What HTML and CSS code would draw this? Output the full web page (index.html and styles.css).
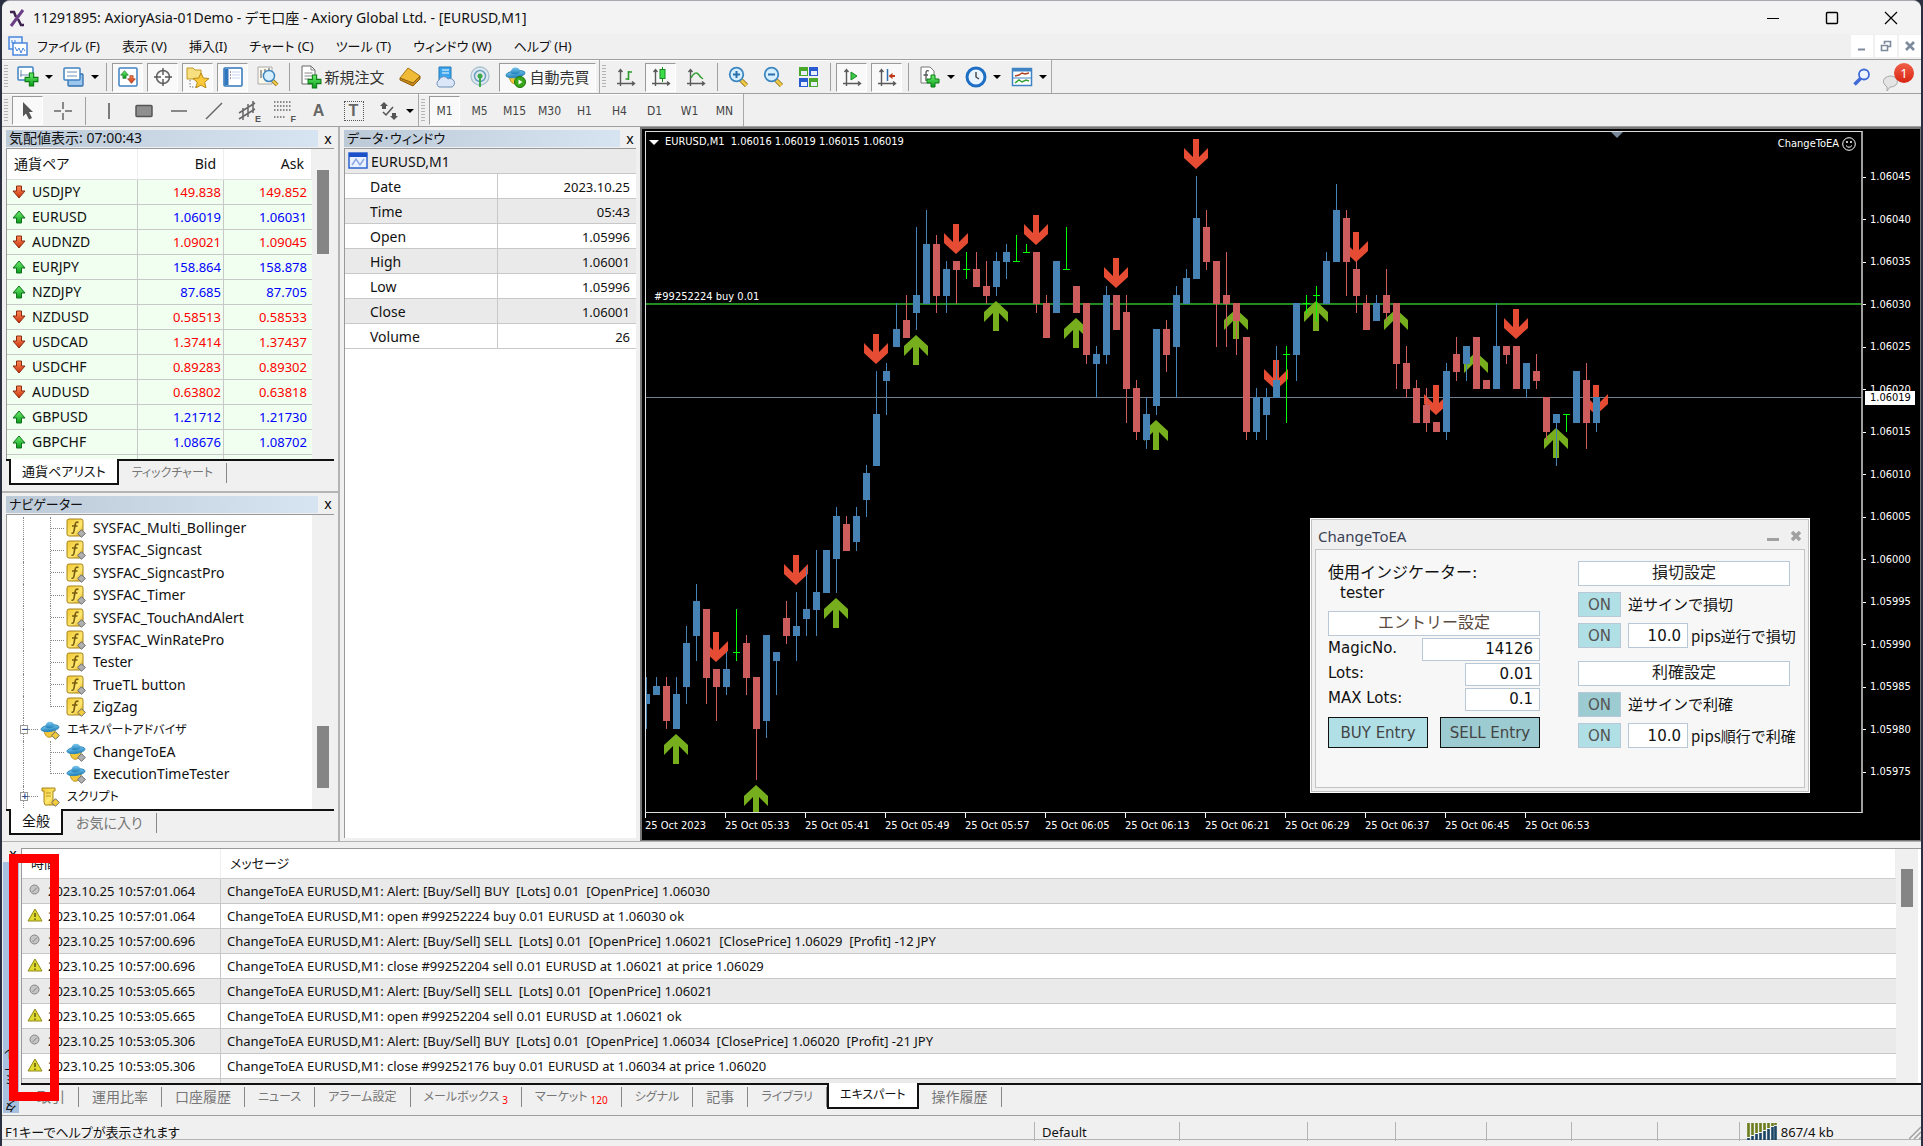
FILE: index.html
```html
<!DOCTYPE html>
<html lang="ja">
<head>
<meta charset="utf-8">
<title>11291895: AxioryAsia-01Demo - デモ口座</title>
<link rel="stylesheet" href="styles.css">
</head>
<body>
<svg class="defs" aria-hidden="true">
  <defs>
    <linearGradient id="gGreen" x1="0" y1="0" x2="0" y2="1"><stop offset="0" stop-color="#6df06d"/><stop offset="1" stop-color="#0a9a1c"/></linearGradient>
    <linearGradient id="gRed" x1="0" y1="0" x2="0" y2="1"><stop offset="0" stop-color="#ff8a55"/><stop offset="1" stop-color="#c8320e"/></linearGradient>
    <linearGradient id="gGold" x1="0" y1="0" x2="1" y2="1"><stop offset="0" stop-color="#f0c832"/><stop offset=".6" stop-color="#ffe870"/><stop offset="1" stop-color="#dca818"/></linearGradient>
    <linearGradient id="gBlue" x1="0" y1="0" x2="0" y2="1"><stop offset="0" stop-color="#7cc8f0"/><stop offset="1" stop-color="#1f7fb8"/></linearGradient>
  </defs>
  <symbol id="down" viewBox="0 0 14 14"><path d="M4.500 1h5v5h3.500L7 13 1 6h3.500z" fill="url(#gRed)" stroke="#8c2a10"/></symbol>
  <symbol id="up" viewBox="0 0 14 14"><path d="M4.500 13h5V8H13L7 1 1 8h3.500z" fill="url(#gGreen)" stroke="#11701c"/></symbol>
  <symbol id="func" viewBox="0 0 20 20"><rect x="1" y="1" width="16" height="17" rx="2" fill="url(#gGold)" stroke="#a8841a"/><path d="M12.500 4.500c-2-1-3 0-3.300 2L8 13c-.3 2-1 2.500-2.500 2M6 8h5.500" fill="none" stroke="#7a5c10" stroke-width="1.600"/></symbol>
  <symbol id="dia" viewBox="0 0 9 9"><path d="M4.500.7 8.300 4.500 4.500 8.300.7 4.500z" fill="currentColor" stroke="#6b6b6b"/></symbol>
  <symbol id="hat" viewBox="0 0 22 20"><path d="M4 9h13l-1 4c-1 3-3 5-6 5s-5-3-6-9z" fill="#f2c83a" stroke="#b58a18"/><ellipse cx="11" cy="8" rx="10" ry="3.600" transform="rotate(-8 11 8)" fill="url(#gBlue)" stroke="#2f88b8"/><path d="M6 7c0-4 2-6 5-6s5 2 5 5c-2 2-7 3-10 1z" fill="url(#gBlue)"/></symbol>
  <symbol id="plus" viewBox="0 0 14 14"><path d="M5 1h4v4h4v4H9v4H5V9H1V5h4z" fill="url(#gGreen)" stroke="#0b7a14"/></symbol>
  <symbol id="dot" viewBox="0 0 16 14"><circle cx="7.500" cy="6.500" r="4.500" fill="#c4c4c4" stroke="#858585"/><path d="M5.500 9 10 4.500" stroke="#858585"/></symbol>
  <symbol id="warn" viewBox="0 0 16 14"><path d="M8 1 15 13H1z" fill="#e0da30" stroke="#8f8a1c"/><path d="M8 5v4M8 10.500V12" stroke="#5a5710" stroke-width="1.500"/></symbol>
  <symbol id="axes" viewBox="0 0 20 20"><path d="M4.500 19V3M1 16.500h17M2.500 5l2-2.500 2 2.500M16 14.500l2.500 2-2.500 2" fill="none" stroke="#5a5a5a" stroke-width="1.400"/></symbol>
  <symbol id="lens" viewBox="0 0 22 22"><path d="m13 14 5.500 5.500" stroke="#8c6a10" stroke-width="4.500"/><path d="m13 14 5.500 5.500" stroke="#f0cc4a" stroke-width="2.800"/><circle cx="8.500" cy="8.500" r="6.800" fill="#d6efff" stroke="#3c86c0" stroke-width="1.800"/></symbol>
</svg>

<div class="app">
  <header class="titlebar">
    <svg class="logo" width="16" height="18" viewBox="0 0 16 18"><path d="M1 3h4l2 5M9 10l3 6h3" fill="none" stroke="#3d2350" stroke-width="2.500"/><path d="M14 1 2 17" stroke="#6a3f86" stroke-width="3"/></svg>
    <h1>11291895: AxioryAsia-01Demo - デモ口座 - Axiory Global Ltd. - [EURUSD,M1]</h1>
    <div class="winctl">
      <button aria-label="最小化"><svg width="14" height="14"><path d="M1 7.500h12" stroke="#000" fill="none"/></svg></button>
      <button aria-label="最大化"><svg width="14" height="14"><rect x="1.500" y="1.500" width="11" height="11" rx="1" stroke="#000" stroke-width="1.400" fill="none"/></svg></button>
      <button aria-label="閉じる"><svg width="14" height="14"><path d="m1 1 12 12M13 1 1 13" stroke="#000" stroke-width="1.200"/></svg></button>
    </div>
  </header>

  <nav class="menubar">
    <svg width="20" height="20" viewBox="0 0 20 20"><rect x="1" y="1" width="13" height="12" fill="#eaf3ff" stroke="#4a86dc" stroke-width="1.500"/><rect x="5" y="7" width="14" height="12" fill="#fff" stroke="#4a86dc" stroke-width="1.500"/><path d="M7 11l2 4 2-3 2 5 2-5 2 3M4 4v3h3V4" fill="none" stroke="#4a86dc"/></svg>
    <button>ファイル (F)</button><button>表示 (V)</button><button>挿入(I)</button><button>チャート (C)</button><button>ツール (T)</button><button>ウィンドウ (W)</button><button>ヘルプ (H)</button>
    <div class="mdictl">
      <button aria-label="最小化"><svg width="12" height="12"><path d="M2 9.500h7" stroke="#7c8a9c" stroke-width="2"/></svg></button>
      <button aria-label="元に戻す"><svg width="12" height="12"><path d="M4.500 4V1.500h6v5H8M1.500 5.500h6v5h-6z" fill="none" stroke="#7c8a9c" stroke-width="1.600"/></svg></button>
      <button aria-label="閉じる"><svg width="12" height="12"><path d="m2 2 8 8M10 2l-8 8" stroke="#7c8a9c" stroke-width="2.600"/></svg></button>
    </div>
  </nav>

  <div class="toolrow">
    <div class="tools">
      <i class="grip"></i>
      <button class="tb drop" aria-label="新規チャート"><svg width="22" height="22" viewBox="0 0 22 22"><rect x="1" y="1" width="15" height="13" rx="1" fill="#fff" stroke="#3f83c4" stroke-width="1.500"/><path d="M4 4v7M3 9h9" stroke="#6a8fb4"/><use href="#plus" x="7" y="6" width="15" height="15"/></svg></button>
      <button class="tb drop" aria-label="表示設定"><svg width="22" height="22" viewBox="0 0 22 22"><rect x="5" y="8" width="15" height="12" rx="1" fill="#9cc6ec" stroke="#2f6fae" stroke-width="1.300"/><rect x="1" y="2" width="16" height="12" rx="1" fill="#fff" stroke="#3f83c4" stroke-width="1.500"/><path d="M4 6h10M4 10h10" stroke="#6a8fb4"/></svg></button>
      <i class="sep"></i>
      <button class="tb on" aria-label="気配値表示"><svg width="20" height="20" viewBox="0 0 20 20"><rect x="1" y="1" width="18" height="18" rx="1" fill="#fff" stroke="#3f83c4" stroke-width="1.500"/><use href="#up" x="2" y="3" width="9" height="9"/><use href="#down" x="9" y="8" width="9" height="9"/></svg></button>
      <button class="tb on" aria-label="データウィンドウ"><svg width="20" height="20" viewBox="0 0 20 20"><circle cx="10" cy="10" r="6.500" fill="none" stroke="#666" stroke-width="1.600"/><path d="M10 1v7M10 12v7M1 10h7M12 10h7" stroke="#555" stroke-width="1.400"/></svg></button>
      <button class="tb on" aria-label="ナビゲーター"><svg width="24" height="22" viewBox="0 0 24 22"><path d="M1 2h6l2 2h6v9H1z" fill="#f8e080" stroke="#c09a28"/><path d="M4 14v7h6" fill="none" stroke="#777" stroke-dasharray="1.500 1.500"/><path d="m15 7 2.300 5 5.700.5-4.300 3.800L20 22l-5-3-5 3 1.300-5.700L7 12.500l5.700-.5z" fill="#f9c93a" stroke="#b98a14"/></svg></button>
      <button class="tb on" aria-label="ターミナル"><svg width="20" height="20" viewBox="0 0 20 20"><rect x="1" y="1" width="18" height="18" rx="1" fill="#fff" stroke="#2f76bc" stroke-width="1.500"/><path d="M3.500 2v16" stroke="#2f76bc" stroke-width="4"/><path d="M9 5h8M9 8h8M9 11h8" stroke="#c9d6f0"/><path d="M7 5h1M7 8h1M7 11h1" stroke="#334"/></svg></button>
      <button class="tb" aria-label="ストラテジーテスター"><svg width="24" height="22" viewBox="0 0 24 22"><path d="M2 1h14v17H2z" fill="#fbf8ec" stroke="#aaa"/><path d="M5 4v8M9 3v10M13 2v10" stroke="#888" stroke-width="1.500"/><use href="#lens" x="6" y="3" width="18" height="18"/></svg></button>
      <i class="sep"></i>
      <button class="tb text"><svg width="22" height="24" viewBox="0 0 22 24"><path d="M2 1h9l4 4v14H2z" fill="#fff" stroke="#666"/><path d="M11 1v4h4M4.500 8h8M4.500 11h8M4.500 14h5" fill="none" stroke="#888"/><use href="#plus" x="7" y="9" width="15" height="15"/></svg>新規注文</button>
      <button class="tb" aria-label="MetaEditor"><svg width="22" height="20" viewBox="0 0 22 20"><path d="m9 1 12 8-7 9L1 11z" fill="#f0bc38" stroke="#a87410"/><path d="m1 11 13 5 7-7v3l-7 7L1 13z" fill="#c88a18" stroke="#8f6010"/></svg></button>
      <button class="tb" aria-label="VPS"><svg width="22" height="22" viewBox="0 0 22 22"><path d="M5 1h12v13H5z" fill="#3aa4ec" stroke="#2278b8"/><path d="M8 4h7M8 7h7" stroke="#fff"/><path d="M5 21a4 4 0 0 1 0-7 5 5 0 0 1 9-1 4 4 0 0 1 4 8z" fill="#dbe7f8" stroke="#6f90b8"/></svg></button>
      <button class="tb" aria-label="シグナル"><svg width="22" height="22" viewBox="0 0 22 22"><circle cx="11" cy="10" r="9" fill="#dfe9ef" stroke="#a8c0d0" stroke-width="1.300"/><circle cx="11" cy="10" r="5.500" fill="none" stroke="#6ba0c4" stroke-width="1.500"/><circle cx="11" cy="10" r="2.500" fill="#3aa84a"/><path d="M11 11v10" stroke="#3aa84a" stroke-width="2"/></svg></button>
      <button class="tb text on auto"><svg width="22" height="24" viewBox="0 0 22 22"><use href="#hat" width="21" height="20"/><circle cx="15" cy="16" r="5.500" fill="#38a818" stroke="#1f7408"/><path d="m13.500 13.500 4 2.500-4 2.500z" fill="#fff"/></svg>自動売買</button>
    </div>
    <div class="tools">
      <i class="grip"></i>
      <button class="tb" aria-label="バーチャート"><svg width="20" height="20"><use href="#axes"/><path d="M12.500 4v9M12.500 5H16M9.500 12h3" stroke="#2a9a2a" stroke-width="1.600" fill="none"/></svg></button>
      <button class="tb on" aria-label="ローソク足"><svg width="20" height="20"><use href="#axes"/><path d="M11.500 0v15" stroke="#1a8a1a"/><rect x="9" y="2.500" width="5" height="9" fill="#3ddc4a" stroke="#128a1c"/></svg></button>
      <button class="tb" aria-label="ラインチャート"><svg width="20" height="20"><use href="#axes"/><path d="M5 11C8 5 11 5 13 8s3 3 4 4" stroke="#35a035" stroke-width="1.500" fill="none"/></svg></button>
      <i class="sep"></i>
      <button class="tb" aria-label="拡大"><svg width="22" height="22"><use href="#lens"/><path d="M5 8.500h7M8.500 5v7" stroke="#2a6eaa" stroke-width="2"/></svg></button>
      <button class="tb" aria-label="縮小"><svg width="22" height="22"><use href="#lens"/><path d="M5 8.500h7" stroke="#2a6eaa" stroke-width="2"/></svg></button>
      <button class="tb" aria-label="整列"><svg width="22" height="22"><path d="M1 1h9v9H1zM11 12h9v9h-9z" fill="#4aa82a"/><path d="M11 1h9v9h-9zM1 12h9v9H1z" fill="#2a5ad0"/><path d="M3 5h6v4H3zM13 5h6v4h-6zM3 16h6v4H3zM13 16h6v4h-6z" fill="#e8f0ff"/></svg></button>
      <i class="sep"></i>
      <button class="tb on" aria-label="自動スクロール"><svg width="20" height="20"><use href="#axes"/><path d="m9 5 6 4-6 4z" fill="#3cc84a" stroke="#158a20"/></svg></button>
      <button class="tb on" aria-label="チャートシフト"><svg width="20" height="20"><use href="#axes"/><path d="M10.500 2v12" stroke="#2f6fae" stroke-width="1.500"/><path d="m11.500 9 4-3v2H18v2h-2.500v2z" fill="#c03a1a"/></svg></button>
      <i class="sep"></i>
      <button class="tb drop" aria-label="インディケータ"><svg width="22" height="22"><path d="M2 1h9l4 4v12H2z" fill="#fff" stroke="#777"/><path d="M10 5c-2-1-3 0-3 2v8M4.500 9H9" fill="none" stroke="#555" stroke-width="1.300"/><use href="#plus" x="7" y="8" width="14" height="14"/></svg></button>
      <button class="tb drop" aria-label="時間足"><svg width="22" height="22"><circle cx="11" cy="11" r="9" fill="#e8f4ff" stroke="#1d6fc4" stroke-width="3"/><path d="M11 6v5l3 2" fill="none" stroke="#444" stroke-width="1.400"/></svg></button>
      <button class="tb drop" aria-label="定型チャート"><svg width="22" height="22"><rect x="1.500" y="2.500" width="19" height="17" fill="#fff" stroke="#3f83c4" stroke-width="1.500"/><path d="M2 4h18" stroke="#3f83c4" stroke-width="3"/><path d="m4 10 4-1 3-2 3 1 4-1" fill="none" stroke="#b04020" stroke-width="1.500"/><path d="m4 17 4-3 3 2 4-2 3 1" fill="none" stroke="#35a035" stroke-width="1.500"/><path d="M2 12h18" stroke="#3f83c4"/></svg></button>
    </div>
    <div class="notify">
      <button class="bare" aria-label="検索"><svg width="18" height="18"><circle cx="11" cy="6.500" r="5" fill="#eef4ff" stroke="#3f6ad8" stroke-width="1.800"/><path d="m7.500 10.500-6 6" stroke="#3f6ad8" stroke-width="3.500"/></svg></button>
      <button class="bare chat" aria-label="通知"><svg width="20" height="20"><path d="M3 13a7 5.500 0 1 1 5 2l-3 4v-4z" fill="#e4e4e4" stroke="#a8a8a8"/></svg><b class="badge">1</b></button>
    </div>
  </div>

  <div class="toolrow second">
    <div class="tools">
      <i class="grip"></i>
      <button class="tb on" aria-label="カーソル"><svg width="14" height="20"><path d="m2 1 10 10H8l3 6-3 1.500-3-6-3 3z" fill="#555"/></svg></button>
      <button class="tb" aria-label="クロスヘア"><svg width="20" height="20"><path d="M10 1v7M10 12v7M1 10h7M12 10h7" stroke="#666" stroke-width="1.500"/></svg></button>
      <i class="sep"></i>
      <button class="tb" aria-label="垂直線"><svg width="20" height="20"><path d="M10 2v16" stroke="#555" stroke-width="1.500"/></svg></button>
      <button class="tb" aria-label="長方形"><svg width="20" height="20"><rect x="2" y="4.500" width="16" height="11" rx="1" fill="#8f8f8f" stroke="#555" stroke-width="1.500"/></svg></button>
      <button class="tb" aria-label="水平線"><svg width="20" height="20"><path d="M2 10h16" stroke="#666" stroke-width="1.500"/></svg></button>
      <button class="tb" aria-label="トレンドライン"><svg width="20" height="20"><path d="M2 18 18 2" stroke="#666" stroke-width="1.500"/></svg></button>
      <button class="tb sub" aria-label="等間隔チャネル"><svg width="22" height="22"><path d="M1 13 17 3M1 19 17 9M5 20V8M10 17V4M15 13V1" stroke="#666" stroke-width="1.500"/></svg><small>E</small></button>
      <button class="tb sub" aria-label="フィボナッチ"><svg width="22" height="22"><path d="M1 2h18M1 6h18M1 10h18M1 17h11" stroke="#666" stroke-width="1.500" stroke-dasharray="1.500 1.500"/></svg><small>F</small></button>
      <button class="tb glyph">A</button>
      <button class="tb glyph frame">T</button>
      <button class="tb drop" aria-label="矢印"><svg width="22" height="22"><path d="m6 2 4 4H8v3H4V6H2zM16 20l-4-4h2v-3h4v3h2z" fill="#555"/><path d="m5 12 3 3 7-8" fill="none" stroke="#555" stroke-width="1.500"/></svg></button>
    </div>
    <div class="tools">
      <i class="grip"></i>
      <button class="tb tf on">M1</button><button class="tb tf">M5</button><button class="tb tf">M15</button><button class="tb tf">M30</button><button class="tb tf">H1</button><button class="tb tf">H4</button><button class="tb tf">D1</button><button class="tb tf">W1</button><button class="tb tf">MN</button>
    </div>
  </div>

  <main class="work">
    <div class="dock">
      <section class="panel market">
        <div class="cap"><h2>気配値表示: 07:00:43</h2><button class="x" aria-label="閉じる">x</button></div>
        <div class="well scrolled">
          <table class="quotes">
            <thead><tr><th>通貨ペア</th><th>Bid</th><th>Ask</th></tr></thead>
            <tbody>
              <tr class="dn"><td><svg><use href="#down"/></svg>USDJPY</td><td>149.838</td><td>149.852</td></tr>
              <tr class="up"><td><svg><use href="#up"/></svg>EURUSD</td><td>1.06019</td><td>1.06031</td></tr>
              <tr class="dn"><td><svg><use href="#down"/></svg>AUDNZD</td><td>1.09021</td><td>1.09045</td></tr>
              <tr class="up"><td><svg><use href="#up"/></svg>EURJPY</td><td>158.864</td><td>158.878</td></tr>
              <tr class="up"><td><svg><use href="#up"/></svg>NZDJPY</td><td>87.685</td><td>87.705</td></tr>
              <tr class="dn"><td><svg><use href="#down"/></svg>NZDUSD</td><td>0.58513</td><td>0.58533</td></tr>
              <tr class="dn"><td><svg><use href="#down"/></svg>USDCAD</td><td>1.37414</td><td>1.37437</td></tr>
              <tr class="dn"><td><svg><use href="#down"/></svg>USDCHF</td><td>0.89283</td><td>0.89302</td></tr>
              <tr class="dn"><td><svg><use href="#down"/></svg>AUDUSD</td><td>0.63802</td><td>0.63818</td></tr>
              <tr class="up"><td><svg><use href="#up"/></svg>GBPUSD</td><td>1.21712</td><td>1.21730</td></tr>
              <tr class="up"><td><svg><use href="#up"/></svg>GBPCHF</td><td>1.08676</td><td>1.08702</td></tr>
              <tr><td></td><td></td><td></td></tr>
            </tbody>
          </table>
          <div class="bar"><i class="thumb top"></i></div>
        </div>
        <div class="tabs"><button class="tab cur">通貨ペアリスト</button><button class="tab kana">ティックチャート</button></div>
      </section>
      <section class="panel navi">
        <div class="cap"><h2>ナビゲーター</h2><button class="x" aria-label="閉じる">x</button></div>
        <div class="well scrolled">
          <ul class="tree">
            <li><i class="rail"></i><i class="branch"></i><svg class="ic"><use href="#func"/><use class="gem" href="#dia" x="11" y="11" width="9" height="9"/></svg>SYSFAC_Multi_Bollinger</li>
            <li><i class="rail"></i><i class="branch"></i><svg class="ic"><use href="#func"/><use class="gem" href="#dia" x="11" y="11" width="9" height="9"/></svg>SYSFAC_Signcast</li>
            <li><i class="rail"></i><i class="branch"></i><svg class="ic"><use href="#func"/><use class="gem" href="#dia" x="11" y="11" width="9" height="9"/></svg>SYSFAC_SigncastPro</li>
            <li><i class="rail"></i><i class="branch"></i><svg class="ic"><use href="#func"/><use class="gem" href="#dia" x="11" y="11" width="9" height="9"/></svg>SYSFAC_Timer</li>
            <li><i class="rail"></i><i class="branch"></i><svg class="ic"><use href="#func"/><use class="gem" href="#dia" x="11" y="11" width="9" height="9"/></svg>SYSFAC_TouchAndAlert</li>
            <li><i class="rail"></i><i class="branch"></i><svg class="ic"><use href="#func"/><use class="gem" href="#dia" x="11" y="11" width="9" height="9"/></svg>SYSFAC_WinRatePro</li>
            <li><i class="rail"></i><i class="branch"></i><svg class="ic"><use href="#func"/><use class="gem" href="#dia" x="11" y="11" width="9" height="9"/></svg>Tester</li>
            <li><i class="rail"></i><i class="branch"></i><svg class="ic"><use href="#func"/><use class="gem" href="#dia" x="11" y="11" width="9" height="9"/></svg>TrueTL button</li>
            <li><i class="rail"></i><i class="branch last"></i><svg class="ic"><use href="#func"/><use class="gem gold" href="#dia" x="11" y="11" width="9" height="9"/></svg>ZigZag</li>
            <li class="top"><i class="rail node"><b>−</b></i><svg class="ic"><use href="#hat"/><use class="gem gold" href="#dia" x="11" y="11" width="9" height="9"/></svg>エキスパートアドバイザ</li>
            <li><i class="rail"></i><i class="branch"></i><svg class="ic"><use href="#hat"/><use class="gem" href="#dia" x="11" y="11" width="9" height="9"/></svg>ChangeToEA</li>
            <li><i class="rail"></i><i class="branch last"></i><svg class="ic"><use href="#hat"/><use class="gem" href="#dia" x="11" y="11" width="9" height="9"/></svg>ExecutionTimeTester</li>
            <li class="top"><i class="rail node"><b>+</b></i><svg class="ic" viewBox="0 0 20 20"><path d="M2 1h13v3h-2v10h3v4H5l-1-3V4H2z" fill="url(#gGold)" stroke="#a8841a"/><path d="M6 6h5M6 9h5" stroke="#b8962a"/><use class="gem gold" href="#dia" x="11" y="11" width="9" height="9"/></svg>スクリプト</li>
          </ul>
          <div class="bar"><i class="thumb low"></i></div>
        </div>
        <div class="tabs"><button class="tab cur">全般</button><button class="tab">お気に入り</button></div>
      </section>
    </div>

    <section class="panel data">
      <div class="cap"><h2>データ･ウィンドウ</h2><button class="x" aria-label="閉じる">x</button></div>
      <div class="well">
        <table class="props">
          <caption><svg width="20" height="17"><rect x="1" y="1" width="18" height="15" fill="#eaf2ff" stroke="#2a62d0" stroke-width="1.500"/><path d="M1 3h18" stroke="#1c50c8" stroke-width="4"/><path d="m4 13 4-6 4 6 4-6" fill="none" stroke="#8aa8e4" stroke-width="1.500"/></svg>EURUSD,M1</caption>
          <tbody>
            <tr><th>Date</th><td>2023.10.25</td></tr>
            <tr><th>Time</th><td>05:43</td></tr>
            <tr><th>Open</th><td>1.05996</td></tr>
            <tr><th>High</th><td>1.06001</td></tr>
            <tr><th>Low</th><td>1.05996</td></tr>
            <tr><th>Close</th><td>1.06001</td></tr>
            <tr><th>Volume</th><td>26</td></tr>
          </tbody>
        </table>
      </div>
    </section>

    <section class="chart">
      <div class="plot">
        <svg id="candles" role="img" aria-label="EURUSD,M1"></svg>
        <div class="legend"><span>EURUSD,M1&nbsp; 1.06016 1.06019 1.06015 1.06019</span></div>
        <div class="ea"><span>ChangeToEA</span><svg width="14" height="14"><circle cx="7" cy="7" r="6.300" fill="none" stroke="#fff"/><path d="M4 8.500q3 3.500 6 0" fill="none" stroke="#fff"/><path d="M5 4v2M9 4v2" stroke="#fff" stroke-width="1.500"/></svg></div>
        <span class="order">#99252224 buy 0.01</span>
      </div>
      <ol class="prices">
        <li>1.06045</li><li>1.06040</li><li>1.06035</li><li>1.06030</li><li>1.06025</li><li>1.06020</li><li>1.06015</li><li>1.06010</li><li>1.06005</li><li>1.06000</li><li>1.05995</li><li>1.05990</li><li>1.05985</li><li>1.05980</li><li>1.05975</li>
      </ol>
      <span class="now">1.06019</span>
      <ol class="times">
        <li>25 Oct 2023</li><li>25 Oct 05:33</li><li>25 Oct 05:41</li><li>25 Oct 05:49</li><li>25 Oct 05:57</li><li>25 Oct 06:05</li><li>25 Oct 06:13</li><li>25 Oct 06:21</li><li>25 Oct 06:29</li><li>25 Oct 06:37</li><li>25 Oct 06:45</li><li>25 Oct 06:53</li>
      </ol>

      <form class="dialog">
        <header><h2>ChangeToEA</h2>
          <button type="button" class="bare" aria-label="最小化"><svg width="14" height="12"><path d="M1 9.500h12" stroke="#a0a0a0" stroke-width="3"/></svg></button>
          <button type="button" class="bare" aria-label="閉じる"><svg width="12" height="12"><path d="m2 2 8 8M10 2l-8 8" stroke="#a0a0a0" stroke-width="3.500"/></svg></button>
        </header>
        <div class="dbody">
          <div class="dcol">
            <p class="ind">使用インジケーター:<span>tester</span></p>
            <div class="head">エントリー設定</div>
            <div class="field"><label for="magic">MagicNo.</label><input id="magic" class="wide" value="14126"></div>
            <div class="field"><label for="lots">Lots:</label><input id="lots" value="0.01"></div>
            <div class="field"><label for="max">MAX Lots:</label><input id="max" value="0.1"></div>
            <div class="entry"><button type="button">BUY Entry</button><button type="button" class="down">SELL Entry</button></div>
          </div>
          <div class="dcol right">
            <fieldset>
              <div class="head dark">損切設定</div>
              <div class="opt"><button type="button">ON</button><span>逆サインで損切</span></div>
              <div class="opt"><button type="button">ON</button><input id="sl" value="10.0"><label for="sl">pips逆行で損切</label></div>
            </fieldset>
            <fieldset>
              <div class="head dark">利確設定</div>
              <div class="opt"><button type="button" class="down">ON</button><span>逆サインで利確</span></div>
              <div class="opt"><button type="button">ON</button><input id="tp" value="10.0"><label for="tp">pips順行で利確</label></div>
            </fieldset>
          </div>
        </div>
      </form>
    </section>
  </main>

  <section class="terminal">
    <div class="side"><button class="x" aria-label="閉じる">x</button><h2><span>ターミナル</span></h2></div>
    <div class="term">
      <div class="logwrap">
        <table class="log">
          <thead><tr><th>時間</th><th>メッセージ</th></tr></thead>
          <tbody>
            <tr><td><svg><use href="#dot"/></svg>2023.10.25 10:57:01.064</td><td>ChangeToEA EURUSD,M1: Alert: [Buy/Sell] BUY&nbsp; [Lots] 0.01&nbsp; [OpenPrice] 1.06030</td></tr>
            <tr><td><svg><use href="#warn"/></svg>2023.10.25 10:57:01.064</td><td>ChangeToEA EURUSD,M1: open #99252224 buy 0.01 EURUSD at 1.06030 ok</td></tr>
            <tr><td><svg><use href="#dot"/></svg>2023.10.25 10:57:00.696</td><td>ChangeToEA EURUSD,M1: Alert: [Buy/Sell] SELL&nbsp; [Lots] 0.01&nbsp; [OpenPrice] 1.06021&nbsp; [ClosePrice] 1.06029&nbsp; [Profit] -12 JPY</td></tr>
            <tr><td><svg><use href="#warn"/></svg>2023.10.25 10:57:00.696</td><td>ChangeToEA EURUSD,M1: close #99252204 sell 0.01 EURUSD at 1.06021 at price 1.06029</td></tr>
            <tr><td><svg><use href="#dot"/></svg>2023.10.25 10:53:05.665</td><td>ChangeToEA EURUSD,M1: Alert: [Buy/Sell] SELL&nbsp; [Lots] 0.01&nbsp; [OpenPrice] 1.06021</td></tr>
            <tr><td><svg><use href="#warn"/></svg>2023.10.25 10:53:05.665</td><td>ChangeToEA EURUSD,M1: open #99252204 sell 0.01 EURUSD at 1.06021 ok</td></tr>
            <tr><td><svg><use href="#dot"/></svg>2023.10.25 10:53:05.306</td><td>ChangeToEA EURUSD,M1: Alert: [Buy/Sell] BUY&nbsp; [Lots] 0.01&nbsp; [OpenPrice] 1.06034&nbsp; [ClosePrice] 1.06020&nbsp; [Profit] -21 JPY</td></tr>
            <tr><td><svg><use href="#warn"/></svg>2023.10.25 10:53:05.306</td><td>ChangeToEA EURUSD,M1: close #99252176 buy 0.01 EURUSD at 1.06034 at price 1.06020</td></tr>
            <tr><td></td><td></td></tr>
          </tbody>
        </table>
        <div class="bar"><i class="thumb log"></i></div>
      </div>
      <div class="tabs">
        <button class="tab">取引</button><button class="tab">運用比率</button><button class="tab">口座履歴</button><button class="tab kana">ニュース</button><button class="tab kana">アラーム設定</button><button class="tab kana">メールボックス<sub>3</sub></button><button class="tab kana">マーケット<sub>120</sub></button><button class="tab kana">シグナル</button><button class="tab">記事</button><button class="tab kana">ライブラリ</button><button class="tab kana cur">エキスパート</button><button class="tab">操作履歴</button>
      </div>
    </div>
    <i class="mark"></i>
  </section>

  <footer class="status">
    <span>F1キーでヘルプが表示されます</span><span>Default</span><span></span><span></span><span></span><span></span><span></span><span></span>
    <span class="net"><svg width="30" height="17"><path d="M1.500 0v14M5.500 0v12M9.500 0v10M13.500 0v9M17.500 0v7M21.500 0v5M25.500 0v3M28.500 0v2" stroke="#6b7d1c" stroke-width="2.600"/><path d="M1.500 15v2M5.500 13v4M9.500 11v6M13.500 10v7M17.500 8v9M21.500 6v11M25.500 4v13M28.500 3v14" stroke="#1c4464" stroke-width="2.600"/></svg>867/4 kb<svg class="size" width="12" height="14"><path d="M0 14 12 2M5 14l7-7M10 14l2-2" stroke="#a0a0a0" stroke-width="1.500"/></svg></span>
  </footer>
</div>
<script src="chart.js"></script>
</body>
</html>
```
FILE: styles.css
```css
* { box-sizing: border-box; }
body {
  margin: 0;
  overflow: hidden;
  background: #2a3040;
  color: #111;
  font: 14px/20px "Noto Sans", "Noto Sans CJK JP", sans-serif;
  font-feature-settings: "palt";
}
h1, h2, p, ul, ol, fieldset { margin: 0; padding: 0; border: 0; font-size: inherit; font-weight: 400; }
ul, ol { list-style: none; }
button, input { font: inherit; font-feature-settings: inherit; color: inherit; padding: 0; border: 0; background: none; border-radius: 0; white-space: nowrap; }
svg { display: block; flex: none; }
.defs { position: absolute; width: 0; height: 0; }

.app {
  display: flex;
  flex-direction: column;
  height: 100vh;
  margin: 0 2px;
  background: #f0f0f0;
  border-top: 1px solid #a8a8ae;
  border-radius: 8px 8px 0 0;
}

/* title and menu */
.titlebar { display: flex; align-items: center; height: 33px; padding: 0 23px 0 7px; background: #f3f3f3; border-radius: 8px 8px 0 0; }
.titlebar h1 { margin-left: 8px; font-size: 14px; white-space: nowrap; }
.winctl { display: flex; gap: 45px; margin-left: auto; }
.menubar { display: flex; align-items: center; gap: 22px; height: 25px; padding: 0 0 2px 6px; font-size: 13px; }
.menubar > svg { margin-right: -13px; }
.mdictl { display: flex; gap: 2px; margin-left: auto; }
.mdictl button { display: grid; place-items: center; width: 22px; height: 22px; background: #fff; }

/* toolbars */
.toolrow { display: flex; height: 34px; border-top: 1px solid #a0a0a0; }
.toolrow.second { border-bottom: 1px solid #a0a0a0; }
.tools { display: flex; align-items: center; gap: 4px; padding: 1px 3px 0 2px; border-right: 1px solid #a8a8a8; box-shadow: inset 0 1px #fff; }
.grip { width: 4px; height: 24px; background: repeating-linear-gradient(#b4b4b4 0 1px, #f0f0f0 1px 3px); }
.sep { width: 1px; height: 28px; margin: 0 1px 0 2px; background: #a0a0a0; }
.second .sep { margin: 0 3px; }
.tb { display: flex; align-items: center; justify-content: center; width: 31px; height: 29px; border: 1px solid transparent; }
.tb.on { background: #f9f9f9; border-color: #9a9a9a #fff #fff #9a9a9a; }
.tb.drop { width: 42px; justify-content: space-between; padding-left: 4px; }
.tb.drop::after { content: ""; border: 4px solid transparent; border-top-color: #000; border-bottom: 0; }
.tb.text { width: 95px; gap: 2px; font-size: 15px; color: #333; }
.tb.auto { width: 97px; }
.tb.sub { position: relative; }
.tb small { position: absolute; right: 2px; bottom: 0; font: 700 9px/9px "Liberation Sans", sans-serif; color: #555; }
.glyph { font: 700 16px/20px "Liberation Sans", sans-serif; color: #666; }
.frame::before { content: ""; position: absolute; width: 18px; height: 18px; border: 1px dotted #555; }
.tf { font: 12px/16px "DejaVu Sans Condensed", "DejaVu Sans", sans-serif; color: #444; }
.notify { display: flex; align-items: center; gap: 11px; margin-left: auto; padding-right: 7px; }
.chat { position: relative; width: 32px; height: 30px; display: flex; align-items: flex-end; }
.badge { position: absolute; top: 1px; right: 0; width: 20px; height: 20px; border-radius: 10px; background: linear-gradient(#f0604a, #d82410); color: #fff; font: 13px/20px "Noto Sans", sans-serif; text-align: center; }

/* docked panels */
.work { flex: 1; min-height: 0; display: grid; grid-template-columns: 338px 300px 1fr; }
.dock { display: flex; flex-direction: column; border-right: 2px solid #b4b4b4; min-height: 0; }
.panel { display: flex; flex-direction: column; min-height: 0; padding: 3px 4px 4px; overflow: hidden; }
.market { flex: 365; border-bottom: 2px solid #b4b4b4; }
.navi { flex: 349; }
.data { padding: 3px 4px; }
.cap { display: flex; justify-content: space-between; flex: none; height: 17px; background: linear-gradient(90deg, #bccad8, #d8e6f4); font-size: 13px; line-height: 16px; }
.cap h2 { padding-left: 3px; white-space: nowrap; }
.market .cap h2 { font-size: 14px; }
.x { width: 16px; padding-left: 4px; background: #f0f0f0; font: 14px/16px "Noto Sans", sans-serif; color: #000; }
.well { flex: 1; min-height: 0; margin-top: 1px; display: flex; overflow: hidden; background: #fff; border-top: 1px solid #999; border-left: 1px solid #999; }
.bar { flex: none; width: 22px; padding: 0 5px; background: #f0f0f0; display: flex; }
.thumb { width: 12px; background: #858585; }
.thumb.top { height: 84px; margin-top: 21px; }
.thumb.low { height: 62px; margin-top: 211px; }
.thumb.log { height: 38px; margin-top: 20px; }

table { border-collapse: separate; border-spacing: 0; table-layout: fixed; }
th, td { padding: 0; font-weight: 400; text-align: left; white-space: nowrap; }
.quotes { flex: 1; width: 0; font-size: 14px; }
.quotes th { height: 31px; border-right: 1px solid #eee; border-bottom: 1px solid #ddd; padding: 0 7px; }
.quotes th:first-child { width: 131px; }
.quotes th:nth-child(2) { width: 86px; }
.quotes th + th { text-align: right; }
.quotes td { height: 25px; background: #f0fff0; border-bottom: 1px solid #c8c8c8; border-right: 1px solid #c8c8c8; padding-right: 2px; }
.quotes td:last-child { border-right: 0; padding-right: 5px; }
.quotes td + td { text-align: right; font-size: 13px; }
.quotes td svg { display: inline-block; width: 14px; height: 14px; margin: 0 6px 0 5px; vertical-align: -2px; }
.dn td + td { color: #f00; }
.up td + td { color: #00f; }

.tabs { display: flex; flex: none; height: 28px; padding-left: 3px; border-top: 2px solid #111; }
.tab { height: 20px; margin-top: 2px; padding: 0 13px; border-right: 1px solid #888; color: #777; font-size: 14px; line-height: 18px; }
.tab.kana { font-size: 12px; }
.tab.cur { height: 26px; margin-top: -2px; padding: 0 11px; background: #fff; color: #111; border: solid #111; border-width: 0 2px 2px; }
.market .tab.cur { font-size: 13px; }
.tab sub { margin-left: 3px; color: #f00; font-size: 10px; line-height: 10px; }

.tree { flex: 1; display: grid; grid-auto-rows: 1fr; padding: 2px 0 1px; }
.tree li { display: flex; align-items: center; min-height: 0; white-space: nowrap; }
.tree .top { font-size: 12px; }
.rail { flex: none; align-self: stretch; width: 27px; margin-left: 16px; border-left: 1px dotted #888; }
.branch { flex: none; align-self: stretch; width: 14px; border-left: 1px dotted #888; display: flex; align-items: center; }
.branch::before { content: ""; width: 100%; border-top: 1px dotted #888; }
.branch.last { align-self: flex-start; height: 50%; border-bottom: 1px dotted #888; }
.branch.last::before { display: none; }
.ic { width: 20px; height: 20px; margin: 0 7px 0 2px; }
.gem { color: #b0b0b0; }
.gold { color: #f2cc3a; }
.node { display: flex; align-items: center; width: 15px; }
.node b { width: 8px; height: 9px; margin-left: -4px; background: #fff; border: 1px solid #999; font: 700 9px/7px "DejaVu Sans", sans-serif; color: #2a4a8a; text-align: center; }
.node::after { content: ""; flex: 1; border-top: 1px dotted #888; }

.data .well { display: block; }
.props { width: 100%; }
.props caption { height: 25px; background: #eaeaea; border-bottom: 1px solid #c8c8c8; text-align: left; padding: 3px 3px 1px; }
.props caption svg { float: left; margin-right: 3px; }
.props th { width: 153px; height: 25px; padding: 1px 0 0 25px; border-right: 1px solid #c8c8c8; border-bottom: 1px solid #c8c8c8; }
.props td { padding: 1px 6px 0 0; text-align: right; border-bottom: 1px solid #c8c8c8; font-size: 13px; }
.props tr:nth-child(even) > * { background: #eaeaea; }

/* chart window */
.chart {
  position: relative;
  display: grid;
  grid-template: 1fr 27px / 1fr 57px;
  min-height: 0;
  padding: 2px 0 0 3px;
  background: #000;
  border: 1px solid #777;
  border-width: 2px 1px 1px 2px;
  color: #fff;
  font: 11px/14px "DejaVu Sans Condensed", "DejaVu Sans", sans-serif;
}
.plot { position: relative; border: 1px solid #ddd; border-right: 2px solid #a0a0a0; overflow: hidden; }
.plot > svg { width: 100%; height: 100%; }
.legend { position: absolute; left: 3px; top: 3px; display: flex; align-items: center; gap: 6px; }
.legend::before { content: ""; border: 5px solid transparent; border-top-color: #fff; border-bottom: 0; }
.ea { position: absolute; right: 5px; top: 5px; display: flex; align-items: center; gap: 3px; }
.order { position: absolute; left: 8px; top: 158px; }
.prices { display: flex; flex-direction: column; justify-content: space-between; padding: 39px 0 34px; }
.prices li { display: flex; align-items: center; gap: 4px; }
.prices li::before { content: ""; width: 3px; border-top: 1px solid #fff; }
.now { position: absolute; right: 5px; top: 262px; width: 50px; padding-left: 5px; background: #fff; color: #000; }
.times { display: grid; grid-template-columns: repeat(12, 80px); grid-column: 1 / -1; }
.times li { white-space: nowrap; line-height: 16px; }
.times li::before { content: ""; display: block; width: 1px; height: 5px; background: #fff; }

/* EA dialog */
.dialog {
  position: absolute;
  right: 110px;
  bottom: 47px;
  display: flex;
  flex-direction: column;
  width: 500px;
  height: 275px;
  padding: 0 4px 4px;
  background: #f0f0f0;
  border: 1px solid #fff;
  box-shadow: inset 0 0 0 1px #c0c0c0;
  color: #111;
  font: 15px/20px "DejaVu Sans", "Noto Sans CJK JP", sans-serif;
  font-feature-settings: normal;
}
.dialog header { display: flex; align-items: center; gap: 10px; height: 30px; padding: 4px 3px 0; flex: none; }
.dialog h2 { flex: 1; color: #3a4254; font: 15px/20px "Noto Sans", sans-serif; }
.dbody { flex: 1; display: flex; justify-content: space-between; padding: 11px 14px 0 12px; background: #f7f7f7; border: 1px solid #c4c4c4; }
.dcol { width: 212px; display: flex; flex-direction: column; gap: 2px; }
.ind { height: 48px; padding-top: 2px; white-space: nowrap; font-size: 16px; }
.ind span { display: block; padding-left: 12px; font-size: 15px; }
.head { height: 25px; border: 1px solid #b8c8d6; background: #fff; text-align: center; font-size: 16px; line-height: 22px; color: #5a4a40; }
.head.dark { color: #222; }
.field { display: flex; justify-content: space-between; height: 23px; line-height: 21px; }
.dialog input { flex: none; width: 75px; border: 1px solid #b8c8d6; background: #fff; text-align: right; padding-right: 6px; }
.dialog input.wide { width: 118px; }
.entry { display: flex; justify-content: space-between; margin-top: 4px; }
.entry button { width: 100px; height: 31px; border: 1px solid #111; background: #b0e0e6; color: #444; }
fieldset { display: flex; flex-direction: column; gap: 6px; min-width: 0; }
.right { gap: 13px; }
.opt { display: flex; align-items: center; height: 25px; white-space: nowrap; }
.opt button { flex: none; width: 43px; height: 25px; margin-right: 7px; border: 1px solid #b8c8d6; background: #b0e0e6; color: #555; }
.dialog .opt input { width: 60px; height: 25px; margin-right: 3px; }
.opt label { font-family: "Noto Sans CJK JP", sans-serif; }
.dialog button.down { background: #9ccbd1; }

/* terminal */
.terminal { position: relative; flex: none; display: flex; height: 274px; border-top: 1px solid #b4b4b4; overflow: hidden; }
.side { display: flex; flex-direction: column; width: 19px; padding: 4px 2px 2px 1px; }
.side h2 { flex: 1; display: flex; background: #a8c0e0; font-size: 13px; line-height: 16px; }
.side span { writing-mode: vertical-rl; transform: rotate(180deg); width: 16px; }
.term { flex: 1; min-width: 0; display: flex; flex-direction: column; padding: 6px 0 4px; }
.logwrap { flex: 1; min-height: 0; display: flex; overflow: hidden; border: solid #999; border-width: 1px 0 0 1px; background: #fff; padding-right: 3px; }
.log { flex: 1; width: 0; height: 0; font-size: 13px; }
.log th { height: 30px; padding: 0 0 2px 9px; border-bottom: 1px solid #ccc; border-right: 1px solid #eee; }
.log th:first-child { width: 199px; }
.log td { height: 25px; padding-left: 6px; border-bottom: 1px solid #c8c8c8; }
.log td:first-child { padding-left: 5px; border-right: 1px solid #c8c8c8; }
.log tbody tr:nth-child(odd) td { background: #eaeaea; }
.log td svg { display: inline-block; width: 16px; height: 14px; margin-right: 5px; vertical-align: -1px; }
.mark { position: absolute; left: 7px; top: 12px; width: 50px; height: 247px; border: 9px solid #f00; }

/* status bar */
.status { flex: none; display: grid; grid-template-columns: 1031fr 145fr 128fr 88fr 90fr 85fr 86fr 82fr 182fr; height: 31px; padding: 6px 0 0; border-top: 1px solid #a0a0a0; box-shadow: inset 0 -6px #f0f0f0, inset 0 -7px #b4b4b4; font-size: 13px; }
.status span { height: 19px; padding: 0 0 0 7px; border-left: 1px solid #b4b4b4; line-height: 20px; white-space: nowrap; }
.status span:first-child { border: 0; padding-left: 3px; }
.status .net { display: flex; align-items: center; gap: 4px; }
.size { margin-left: auto; }
```
FILE: chart.js
```js
// Each bar: kind (b = bull, r = bear, g = doji), body top, body bottom, high, low.
// Prices are points above 1.06000.
const bars = `b -16 -17 -14 -20|b -15 -16 -14 -16|r -15 -19 -14 -20|b -16 -20 -14 -20|b -10 -15 -8 -17|b -5 -9 -3 -12|r -6 -14 -6 -17|r -13 -15 -13 -19
b -13 -15 -11 -16|g -11 -11 -6 -12|r -10 -14 -9 -16|r -14 -20 -14 -26|b -9 -19 -9 -21|b -11 -12 -11 -16|r -7 -9 -5 -10|b -8 -9 -4 -12
b -6 -7 -1 -9|b -4 -6 1 -9|b 1 -4 1 -4|b 5 0 6 -4|r 4 1 5 1|b 5 2 6 1|b 10 7 11 5|b 17 11 22 11
b 22 21 23 17|b 27 25 30 25|r 28 26 31 26|b 31 29 39 27|b 37 30 41 30|r 37 31 38 29|b 34 31 35 29|r 35 34 35 30
g 34 34 36 33|r 34 32 36 32|r 32 31 35 30|b 35 32 36 31|b 36 35 37 33|g 35 35 38 35|g 36 36 37 36|r 36 30 36 29
r 30 26 31 26|b 35 29 35 29|g 34 34 39 34|r 32 29 32 29|r 30 24 30 23|b 24 23 25 19|b 31 24 32 23|r 31 27 31 27
r 29 20 31 16|r 20 15 21 14|b 17 14 19 13|b 27 18 27 17|r 27 24 28 22|b 31 25 32 19|b 33 30 34 30|b 40 33 45 33
r 39 35 41 34|r 35 30 35 25|r 31 30 36 25|r 30 28 30 24|r 26 15 26 14|b 19 15 20 14|b 19 17 20 14|b 21 19 25 19
g 24 24 25 16|b 30 24 30 21|g 30 30 31 29|g 31 31 32 28|b 35 30 36 30|b 41 35 44 35|r 40 35 41 31|r 34 31 35 29
r 30 27 31 27|b 30 28 31 28|r 31 29 34 28|r 30 23 30 20|r 23 20 25 19|r 20 16 21 16|r 18 16 20 15|r 16 15 16 15
b 22 15 23 14|r 24 22 26 21|b 25 23 25 21|r 26 20 26 20|r 21 20 21 20|b 25 20 30 20|r 25 24 25 23|r 25 20 25 20
b 23 20 23 19|r 22 21 24 20|r 19 15 19 14|b 17 16 17 11|g 17 17 17 15|b 22 16 22 16|r 21 16 23 13|b 19 16 19 15`
  .split(/[|\n]/).map(s => s.trim().split(' '));

const sells = [[7, -13], [15, -4], [23, 22], [31, 35], [39, 36], [47, 31], [55, 45], [63, 19], [71, 34], [79, 16], [87, 25], [95, 16]];
const buys = [[3, -20], [11, -26], [19, -4], [27, 27], [35, 31], [43, 29], [51, 17], [59, 30], [67, 31], [75, 30], [83, 25], [91, 16]];

const fill = { b: '#4682b4', r: '#cd5c5c', g: '#00ff00' };
const step = 8.5;
const y = p => Math.round(171 + (30 - p) * step);
const x = i => i * 10;
const rect = (l, t, w, h, c) => `<rect x="${l}" y="${t}" width="${w}" height="${h}" fill="${c}"/>`;

let out = rect(0, y(30), '100%', 2, '#228b22') + rect(0, y(19), '100%', 1, '#708090');
for (const [i, p] of sells) {
  out += `<path transform="translate(${x(i)} ${y(p) - 7})" d="M-3-30H3V-12L12-21V-11L0 0L-12-11V-21L-3-12Z" fill="#e64c34"/>`;
}
for (const [i, p] of buys) {
  out += `<path transform="translate(${x(i)} ${y(p) + 6})" d="M-3 30H3V12L12 21V11L0 0L-12 11V21L-3 12Z" fill="#76ae1e"/>`;
}
bars.forEach(([k, top, bottom, high, low], i) => {
  out += rect(x(i), y(high), 1, y(low) - y(high) + 1, fill[k]);
  out += rect(x(i) - 3, y(top), 7, k === 'g' ? 1 : y(bottom) - y(top) + 1, fill[k]);
});
out += '<path d="M965 0h12l-6 6z" fill="#778899"/>';
document.getElementById('candles').innerHTML = out;
```
